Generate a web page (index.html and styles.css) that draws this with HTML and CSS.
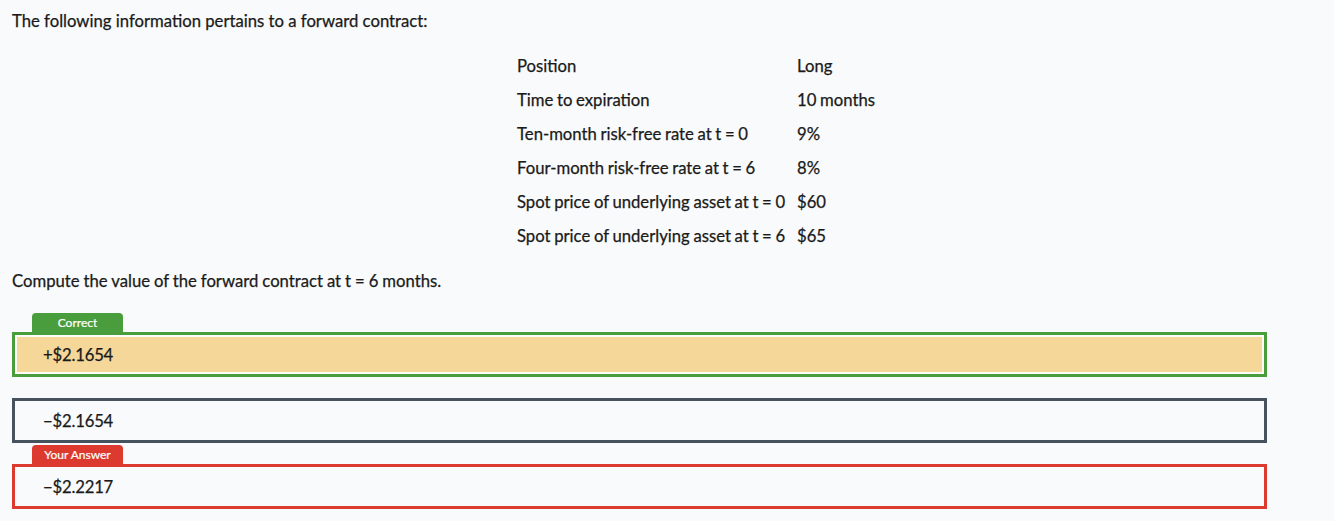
FILE: index.html
```html
<!DOCTYPE html>
<html>
<head>
<meta charset="utf-8">
<link rel="stylesheet" href="styles.css">
</head>
<body>
<p class="intro">The following information pertains to a forward contract:</p>
<div class="info">
  <div class="cell">Position</div><div class="cell">Long</div>
  <div class="cell">Time to expiration</div><div class="cell">10 months</div>
  <div class="cell">Ten-month risk-free rate at t = 0</div><div class="cell">9%</div>
  <div class="cell">Four-month risk-free rate at t = 6</div><div class="cell">8%</div>
  <div class="cell">Spot price of underlying asset at t = 0</div><div class="cell">$60</div>
  <div class="cell">Spot price of underlying asset at t = 6</div><div class="cell">$65</div>
</div>
<p class="question">Compute the value of the forward contract at t = 6 months.</p>
<div class="options">
  <div class="option">
    <div class="tabrow"><span class="tab tab-correct">Correct</span></div>
    <div class="box box-correct"><div class="inner">+$2.1654</div></div>
  </div>
  <div class="option">
    <div class="tabrow"></div>
    <div class="box box-neutral"><div class="inner">−$2.1654</div></div>
  </div>
  <div class="option">
    <div class="tabrow"><span class="tab tab-wrong">Your Answer</span></div>
    <div class="box box-wrong"><div class="inner">−$2.2217</div></div>
  </div>
</div>
</body>
</html>
```
FILE: styles.css
```css
html, body {
  margin: 0;
  padding: 0;
}
body {
  background: #f9fafb;
  color: #1a1a1a;
  font-family: "Lato", "Liberation Sans", sans-serif;
  font-size: 16.7px;
  -webkit-text-stroke: 0.25px #1a1a1a;
  padding: 0 12px;
}
.intro {
  margin: 9px 0 0;
  line-height: 24px;
}
.info {
  display: grid;
  grid-template-columns: 280px auto;
  grid-auto-rows: 34px;
  align-items: center;
  margin: 16px 0 0 505px;
  width: max-content;
  word-spacing: -0.6px;
}
.question {
  margin: 16px 0 0;
  line-height: 24px;
  word-spacing: -0.3px;
}
.options {
  margin-top: 20px;
  width: 1255px;
  display: flex;
  flex-direction: column;
  gap: 2px;
}
.tabrow {
  height: 19px;
  display: flex;
  padding-left: 20px;
}
.tab {
  width: 91px;
  height: 19px;
  border-radius: 4px 4px 0 0;
  color: #fff;
  -webkit-text-stroke: 0.2px #fff;
  font-size: 12px;
  font-weight: 400;
  line-height: 19px;
  text-align: center;
}
.tab-correct { background: #4a9d3c; }
.tab-wrong { background: #dc3a2f; }
.box {
  height: 45px;
  box-sizing: border-box;
  border: 3px solid;
  padding: 2px;
}
.box-correct { border-color: #4a9d3c; background: #fdfcf7; }
.box-neutral { border-color: #46525d; }
.box-wrong { border-color: #dc3a2f; }
.inner {
  height: 100%;
  display: flex;
  align-items: center;
  padding-left: 26px;
  letter-spacing: -0.2px;
}
.box-correct .inner { background: #f4d799; }
```
